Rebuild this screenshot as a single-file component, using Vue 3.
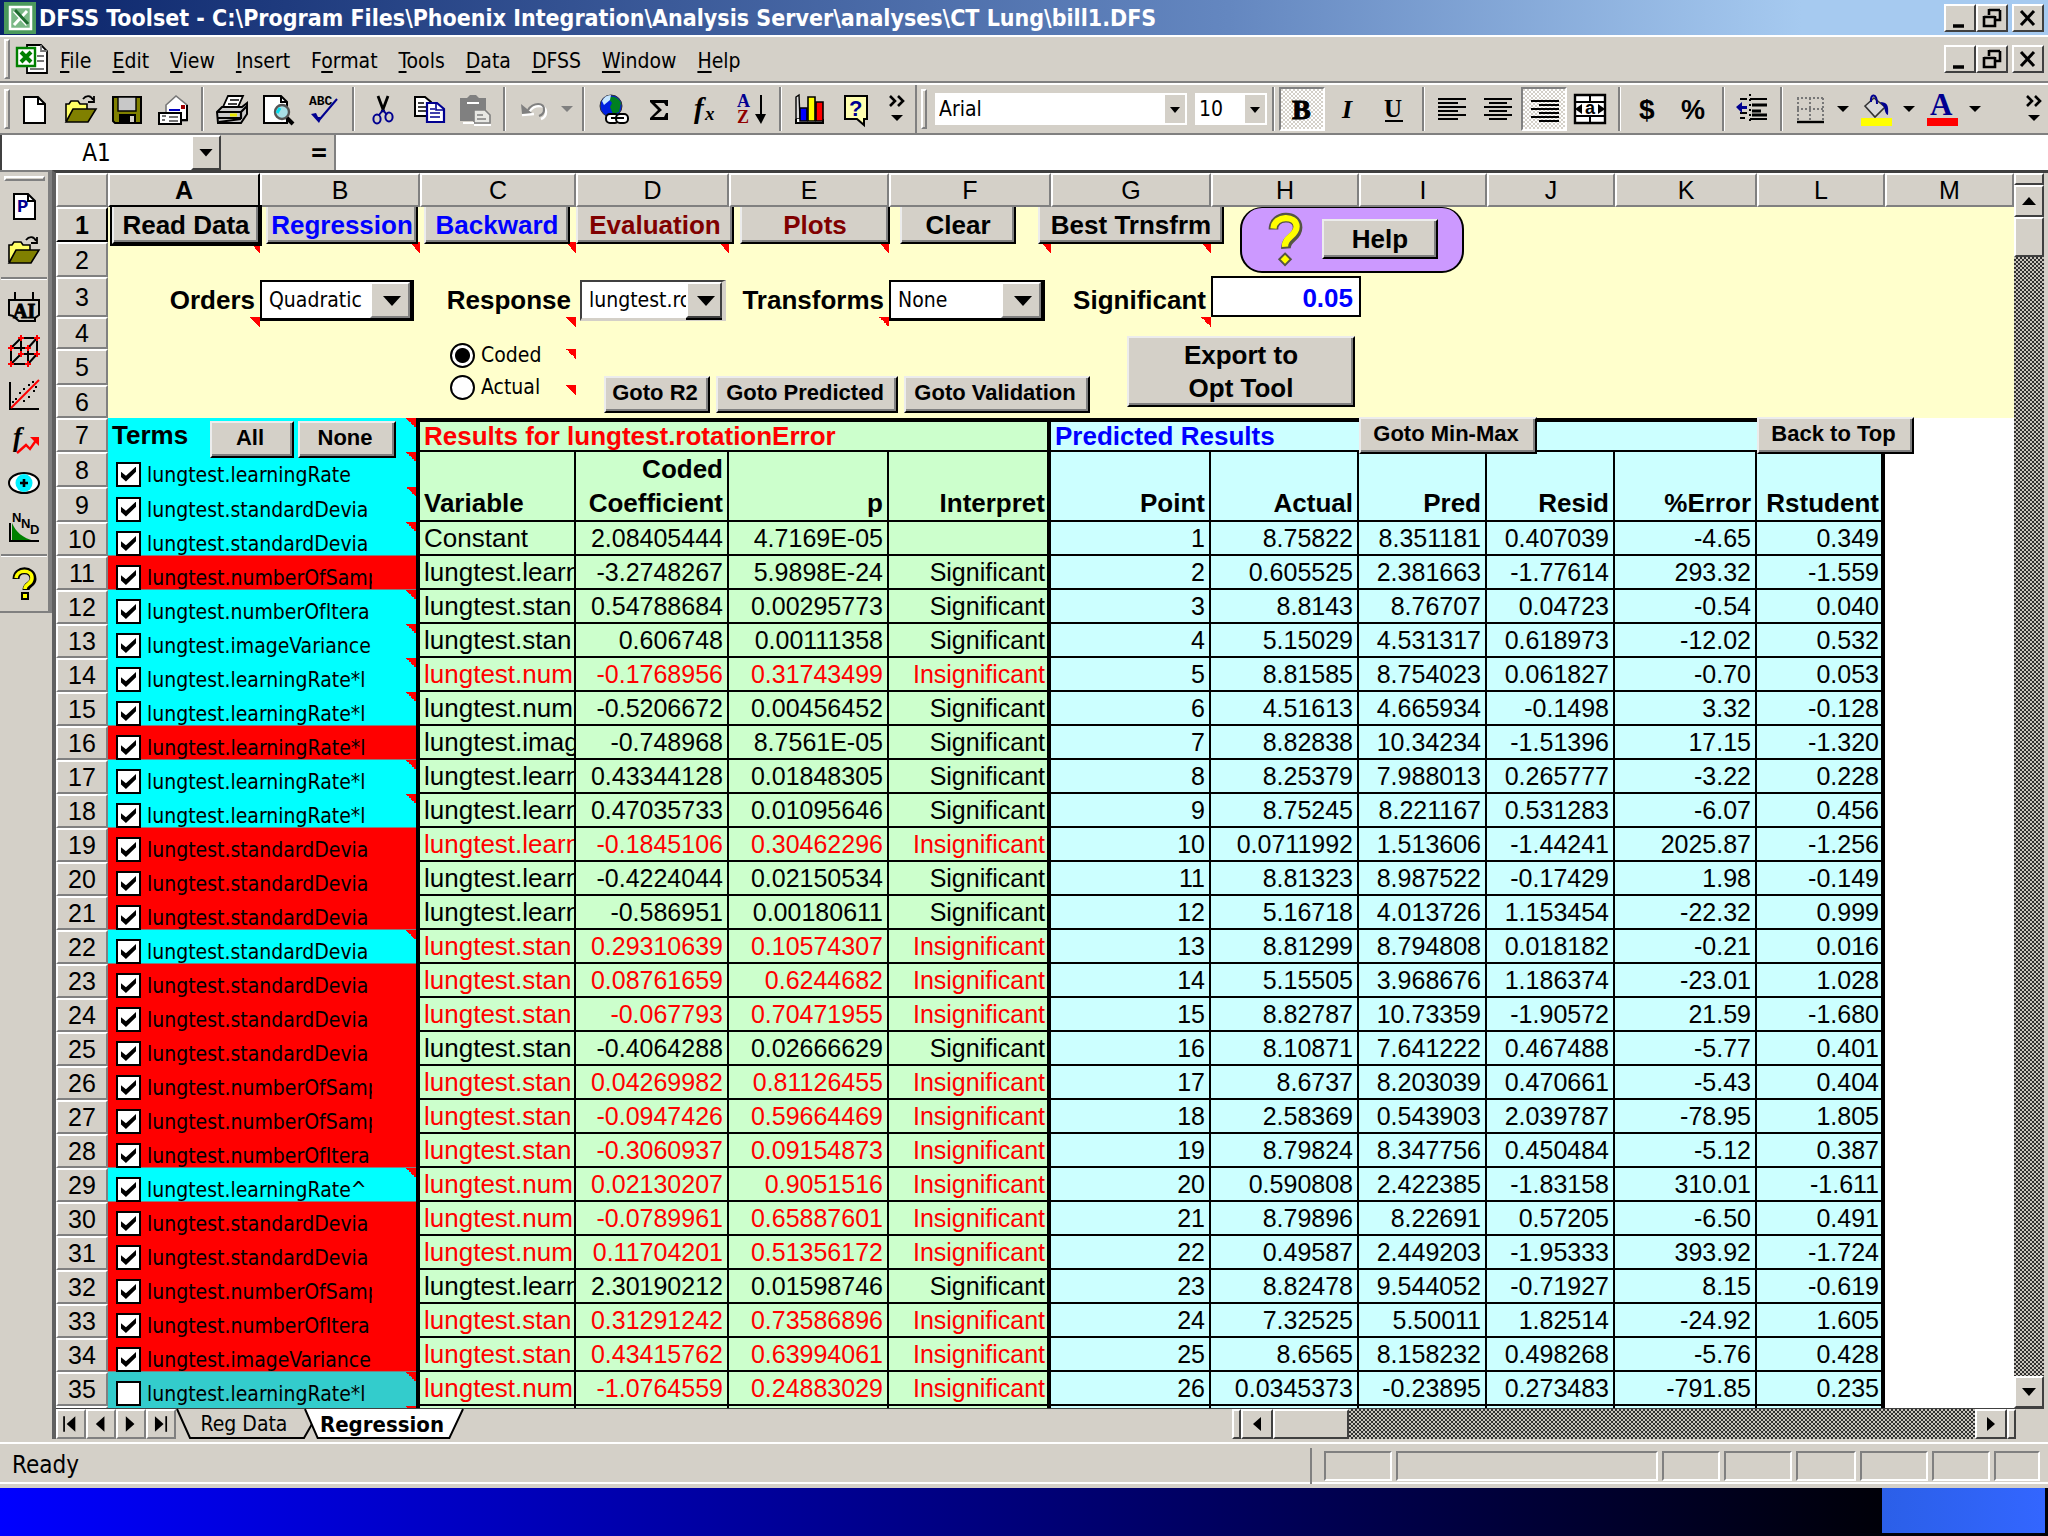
<script setup>
import { ref, reactive } from 'vue';

const menus = [
    ['', 'F', 'ile'], ['', 'E', 'dit'], ['', 'V', 'iew'], ['', 'I', 'nsert'], ['F', 'o', 'rmat'],
    ['', 'T', 'ools'], ['', 'D', 'ata'], ['', 'D', 'FSS'], ['', 'W', 'indow'], ['', 'H', 'elp']
];

const folder = '<path d="M1 28V11h3l2-3h7l2 3h7v5" fill="#ffff66" stroke="#000" stroke-width="1.6"/><path d="M1 29l7-13h23l-8 13z" fill="#808000" stroke="#000" stroke-width="1.6"/><path d="M18 6c3-4 8-4 10 1M29 3v6h-6" fill="none" stroke="#000" stroke-width="1.8"/>';

const icons = {
    excel: '<path d="M11 2h14l6 6v22H11z" fill="#fff" stroke="#000" stroke-width="1.8"/><path d="M25 2v6h6M21 13h7M21 18h7M14 26h14" fill="none" stroke="#777" stroke-width="1.8"/><path d="M1 5h18v18H1z" fill="#fff" stroke="#008000" stroke-width="2.4"/><path d="M5 9l10 10M15 9L5 19" stroke="#008000" stroke-width="4"/>',
    file: '<path d="M5 4h14l7 7v19H5z" fill="#fff" stroke="#000" stroke-width="2"/><path d="M19 4v7h7" fill="none" stroke="#000" stroke-width="2"/>',
    open: folder,
    save: '<path d="M2 4h28v26H4l-2-2z" fill="#808000" stroke="#000" stroke-width="2"/><path d="M7 4h18v14H7z" fill="#c8c8c8" stroke="#000" stroke-width="1.4"/><path d="M8 21h17v9H8z" fill="#000"/><path d="M19 23h4v6h-4z" fill="#d4d0c8"/>',
    mail: '<path d="M9 12l10-9 11 9v16H9z" fill="#fff" stroke="#777" stroke-width="1.6"/><path d="M30 12v15h-8" fill="none" stroke="#000" stroke-width="2"/><path d="M12 17h11" stroke="#0000c0" stroke-width="2"/><path d="M24 12h4v4h-4z" fill="#a00000"/><path d="M2 20h22v11H2z" fill="#fff" stroke="#000" stroke-width="2"/><path d="M5 23h4M5 27h3M12 24h9M12 28h9" stroke="#444" stroke-width="1.6"/>',
    print: '<path d="M7 14l5-11h15l-5 11z" fill="#fff" stroke="#000" stroke-width="1.8"/><path d="M14 7h9M12 11h9" stroke="#000" stroke-width="1.6"/><path d="M1 19l5-5h20l5-4v11l-6 9H2z" fill="#c8c8c8" stroke="#000" stroke-width="2"/><path d="M1 19h24v6H1M25 19l6-6M3 29l22-3" fill="none" stroke="#000" stroke-width="2.2"/><path d="M14 22h7" stroke="#e6e600" stroke-width="3"/>',
    preview: '<path d="M2 3h17l6 6v21H2z" fill="#fff" stroke="#000" stroke-width="2"/><path d="M19 3v6h6" fill="none" stroke="#000" stroke-width="2"/><circle cx="20" cy="19" r="7" fill="#a8dfe6" stroke="#555" stroke-width="2.4"/><path d="M18 15l-3 5" stroke="#00e0f0" stroke-width="3"/><path d="M25 25l6 6" stroke="#000" stroke-width="4"/>',
    spell: '<text x="1" y="12" font-family="Liberation Mono" font-weight="bold" font-size="13">ABC</text><path d="M29 6L12 26" stroke="#000090" stroke-width="2"/><path d="M3 21l8 9 3-6-4 0-2-4z" fill="#000090"/>',
    cut: '<path d="M11 3l6 16M21 3l-6 16" stroke="#000" stroke-width="2.8"/><path d="M16 17l-4 5M16 17l4 5" stroke="#000090" stroke-width="2"/><ellipse cx="10" cy="26" rx="3.6" ry="4.4" fill="none" stroke="#000090" stroke-width="2"/><ellipse cx="22" cy="24" rx="3.6" ry="4.4" fill="none" stroke="#000090" stroke-width="2"/>',
    copy: '<path d="M2 4h10l6 5v14H2z" fill="#fff" stroke="#000" stroke-width="2"/><path d="M5 10h6M5 14h8M5 18h8" stroke="#000" stroke-width="1.6"/><path d="M14 10h10l7 6v13H14z" fill="#fff" stroke="#000090" stroke-width="2.2"/><path d="M17 16h5M17 20h10M17 24h10M23 10v7h7" fill="none" stroke="#000090" stroke-width="1.6"/>',
    paste: '<path d="M1 5h7l3-3h6l3 3h7v23H1z" fill="#808080"/><path d="M8 10h12" stroke="#fff" stroke-width="2"/><path d="M15 17h11l5 5v8H15z" fill="#e8e8e4" stroke="#808080" stroke-width="1.6"/><path d="M18 22h6M18 26h9" stroke="#808080" stroke-width="1.6"/><path d="M4 30h11M15 32h17" stroke="#fff" stroke-width="2"/>',
    undo: '<path d="M11 19c5-8 17-8 17 0 0 4-2 6-5 7M4 22l12-1" fill="none" stroke="#fff" stroke-width="2.4"/><path d="M3 11l11 9-10 1z" fill="#808080"/><path d="M10 17c5-8 17-8 16 0 0 3-2 5-5 6" fill="none" stroke="#808080" stroke-width="2.2"/>',
    globe: '<circle cx="14" cy="13" r="11" fill="#0020e0" stroke="#333" stroke-width="1"/><path d="M11 5c5-3 11 0 13 5l-2 9-6 2-3-7 2-4z" fill="#008020"/><path d="M5 8c2-4 5-6 9-6l-1 5-6 5z" fill="#c8e8ff"/><rect x="9" y="21" width="13" height="9" rx="4" fill="#fff" stroke="#000" stroke-width="2"/><rect x="19" y="21" width="12" height="9" rx="4" fill="#fff" stroke="#000" stroke-width="2"/><path d="M14 25h13" stroke="#000" stroke-width="2"/>',
    sum: '<path d="M7 7h18v6h-2l-2-3H12l7 7-8 7h10l2-4h2v7H7v-2l8-8-8-8z" fill="#000"/>',
    fx: '<text x="5" y="25" font-family="Liberation Serif" font-style="italic" font-weight="bold" font-size="29">f</text><text x="16" y="27" font-family="Liberation Serif" font-style="italic" font-weight="bold" font-size="19">x</text>',
    sort: '<text x="2" y="14" font-family="Liberation Serif" font-weight="bold" font-size="18" fill="#000090">A</text><text x="2" y="30" font-family="Liberation Serif" font-weight="bold" font-size="18" fill="#900000">Z</text><path d="M26 2v22" stroke="#000" stroke-width="2"/><path d="M20 21h11l-5 10z"/>',
    chart: '<path d="M2 4l3-2 1 24H2z" fill="#ddd" stroke="#000" stroke-width="1.4"/><path d="M2 26v4h27v-4" fill="#fff" stroke="#000" stroke-width="2"/><path d="M6 15h7v13H6z" fill="#0000ff" stroke="#000" stroke-width="1.6"/><path d="M14 4h7v24h-7z" fill="#ffff00" stroke="#000" stroke-width="1.6"/><path d="M22 9h7v19h-7z" fill="#ff0000" stroke="#000" stroke-width="1.6"/>',
    help: '<path d="M5 3h22v23h-3v6l-7-6H5z" fill="#ffffb0" stroke="#000" stroke-width="2"/><text x="9" y="23" font-family="Liberation Sans" font-weight="bold" font-size="22" fill="#000090">?</text>',
    bold: '<text x="6" y="26" font-family="Liberation Serif" font-weight="bold" font-size="28" stroke="#000" stroke-width="1">B</text>',
    italic: '<text x="10" y="25" font-family="Liberation Serif" font-weight="bold" font-style="italic" font-size="26">I</text>',
    underline: '<text x="6" y="24" font-family="Liberation Serif" font-weight="bold" font-size="25">U</text><path d="M7 28h18" stroke="#000" stroke-width="2"/>',
    left: '<path d="M2 6h28M2 10h20M2 14h28M2 18h20M2 22h28M2 26h20" stroke="#000" stroke-width="2"/>',
    center: '<path d="M2 6h28M7 10h18M2 14h28M7 18h18M2 22h28M7 26h18" stroke="#000" stroke-width="2"/>',
    right: '<path d="M3 8h28M11 12h20M3 16h28M11 20h20M3 24h28M11 28h20" stroke="#000" stroke-width="2"/>',
    merge: '<path d="M1 2h30v28H1z" fill="#fff" stroke="#000" stroke-width="2.4"/><path d="M1 9h30M1 23h30M16 2v7M16 23v7" stroke="#000" stroke-width="2"/><path d="M1 16l7-5v10zM31 16l-7-5v10z"/><text x="11" y="21" font-family="Liberation Sans" font-weight="bold" font-size="18">a</text>',
    dollar: '<text x="7" y="26" font-family="Liberation Sans" font-weight="bold" font-size="28">$</text>',
    percent: '<text x="3" y="26" font-family="Liberation Sans" font-weight="bold" font-size="27">%</text>',
    indent: '<path d="M14 6h17M14 26h17M4 6h7M4 20h7M4 25h5" stroke="#000" stroke-width="2"/><path d="M16 12h15M16 18h9M16 22h15" stroke="#000" stroke-width="3"/><path d="M14 1v30" stroke="#000" stroke-width="2" stroke-dasharray="2 3"/><path d="M0 14l6-5v4h5v3H6v4z" fill="#000090"/>',
    borders: '<path d="M3 5h27M3 16h27M4 5v23M16 5v23M29 5v23" stroke="#777" stroke-width="2" stroke-dasharray="2 2"/><path d="M3 29h27" stroke="#000" stroke-width="2.4"/>',
    fill: '<path d="M5 13l9-8 11 9-10 10z" fill="#d8d8d8" stroke="#333" stroke-width="1.6"/><path d="M11 9c-1-9 6-9 6 2" fill="none" stroke="#000090" stroke-width="2"/><path d="M20 9c7 0 9 3 8 13-3-1-3-5-4-8z" fill="#000090"/><path d="M1 25h31v8H1z" fill="#ffff00"/>',
    color: '<text x="4" y="22" font-family="Liberation Serif" font-weight="bold" font-size="31" fill="#000090">A</text><path d="M1 25h31v8H1z" fill="#ff0000"/>',
    page: '<path d="M6 4h14l7 7v18H6z" fill="#fff" stroke="#000" stroke-width="2"/><path d="M20 4v7h7" fill="none" stroke="#000" stroke-width="2"/><text x="9" y="22" font-family="Liberation Mono" font-weight="bold" font-size="19" fill="#000090">P</text>',
    ai: '<path d="M7 1v8M25 1v8M1 9h30v15l-4 3v3H11l-6-5-4-1z" fill="none" stroke="#000" stroke-width="2"/><text x="5" y="27" font-family="Liberation Serif" font-weight="bold" font-size="20" stroke="#000" stroke-width="1">AI</text>',
    cube: '<path d="M3 13h17v16H3zM13 3h16v16H13zM3 13L13 3M20 13l9-10M20 29l9-10M3 29l10-10" fill="none" stroke="#000" stroke-width="2"/><path d="M3 10v6M0 13h6M20 10v6M17 13h6M3 26v6M0 29h6M20 26v6M17 29h6M13 0v6M10 3h6M29 0v6M26 3h6M13 16v6M10 19h6M29 16v6M26 19h6" stroke="#ff0000" stroke-width="2"/>',
    scatter: '<path d="M2 3v27h29" fill="none" stroke="#000" stroke-width="2"/><path d="M3 29L31 1" stroke="#ff0000" stroke-width="2"/><path d="M11 14h2M15 10h2M20 6h2M24 3h2M20 18h2M15 22h2M25 12h2M7 20h2M4 23h2M27 8h2" stroke="#000" stroke-width="2"/>',
    trend: '<text x="5" y="23" font-family="Liberation Serif" font-style="italic" font-weight="bold" font-size="27">f</text><path d="M9 30l9-8 4 4 7-10" fill="none" stroke="#ff0000" stroke-width="2.4"/><path d="M22 14h9v9z" fill="#ff0000"/>',
    eye: '<ellipse cx="16" cy="16" rx="15" ry="10" fill="#fff" stroke="#000" stroke-width="2"/><ellipse cx="16" cy="16" rx="8.5" ry="9" fill="#00f0ff"/><path d="M16 12v8M12 16h8" stroke="#000" stroke-width="2.6"/>',
    nnd: '<path d="M4 12c4 9 10 15 23 18H4z" fill="#008000"/><path d="M2 12v18h29" fill="none" stroke="#000" stroke-width="2"/><text x="4" y="11" font-family="Liberation Sans" font-size="13" font-weight="bold">N</text><text x="13" y="17" font-family="Liberation Sans" font-size="13" font-weight="bold">N</text><text x="22" y="23" font-family="Liberation Sans" font-size="13" font-weight="bold">D</text>',
    question: '<path d="M8 11c0-11 17-11 17 0 0 6-7 5-7 11" fill="none" stroke="#000" stroke-width="7"/><path d="M13 24h8v8h-8z" fill="#000"/><path d="M8 10c1-9 16-9 16 0 0 7-7 5-7 11" fill="none" stroke="#ffff00" stroke-width="3.6"/><path d="M15 26h4v4h-4z" fill="#ffff00"/>'
};

const standardTools = ['file', 'open', 'save', 'mail', '|', 'print', 'preview', 'spell', '|', 'cut', 'copy', 'paste', '|', 'undo', 'v', '|', 'globe', 'sum', 'fx', 'sort', '|', 'chart', 'help'];
const formatTools = ['|', 'bold', 'italic', 'underline', '|', 'left', 'center', 'right', 'merge', '|', 'dollar', 'percent', '|', 'indent', '|', 'borders', 'v', 'fill', 'v', 'color', 'v'];
const sideTools = ['page', 'open', '-', 'ai', 'cube', 'scatter', 'trend', 'eye', 'nnd', '-', 'question'];
const pressed = ['bold', 'right'];

const letters = 'ABCDEFGHIJKLM'.split('');

// columns of the top rows that carry a comment marker
const notes = { 2: 'ABCDEFG', 4: 'ACEG', 5: 'C', 6: 'C' };

const orders = ref('Quadratic');
const response = ref('lungtest.rotationError');
const transforms = ref('None');
const significant = ref('0.05');
const scale = ref('coded');
const font = ref('Arial');
const fontSize = ref('10');
const cellName = ref('A1');
const formula = ref('');

const term = (name, color, checked = true) => ({ name: 'lungtest.' + name, color, checked });
const terms = reactive([
    term('learningRate', 'cyan'),
    term('standardDevia', 'cyan'),
    term('standardDevia', 'cyan'),
    term('numberOfSamp', 'red'),
    term('numberOfItera', 'cyan'),
    term('imageVariance', 'cyan'),
    term('learningRate*l', 'cyan'),
    term('learningRate*l', 'cyan'),
    term('learningRate*l', 'red'),
    term('learningRate*l', 'cyan'),
    term('learningRate*l', 'cyan'),
    term('standardDevia', 'red'),
    term('standardDevia', 'red'),
    term('standardDevia', 'red'),
    term('standardDevia', 'cyan'),
    term('standardDevia', 'red'),
    term('standardDevia', 'red'),
    term('standardDevia', 'red'),
    term('numberOfSamp', 'red'),
    term('numberOfSamp', 'red'),
    term('numberOfItera', 'red'),
    term('learningRate^', 'cyan'),
    term('standardDevia', 'red'),
    term('standardDevia', 'red'),
    term('numberOfSamp', 'red'),
    term('numberOfItera', 'red'),
    term('imageVariance', 'red'),
    term('learningRate*l', 'teal', false)
]);

// variable, coefficient, p, interpret, then actual, pred, resid, %error, rstudent
const results = [
    ['Constant', '2.08405444', '4.7169E-05', '', '8.75822', '8.351181', '0.407039', '-4.65', '0.349'],
    ['lungtest.learn', '-3.2748267', '5.9898E-24', 'Significant', '0.605525', '2.381663', '-1.77614', '293.32', '-1.559'],
    ['lungtest.stan', '0.54788684', '0.00295773', 'Significant', '8.8143', '8.76707', '0.04723', '-0.54', '0.040'],
    ['lungtest.stan', '0.606748', '0.00111358', 'Significant', '5.15029', '4.531317', '0.618973', '-12.02', '0.532'],
    ['lungtest.num', '-0.1768956', '0.31743499', 'Insignificant', '8.81585', '8.754023', '0.061827', '-0.70', '0.053'],
    ['lungtest.num', '-0.5206672', '0.00456452', 'Significant', '4.51613', '4.665934', '-0.1498', '3.32', '-0.128'],
    ['lungtest.imag', '-0.748968', '8.7561E-05', 'Significant', '8.82838', '10.34234', '-1.51396', '17.15', '-1.320'],
    ['lungtest.learn', '0.43344128', '0.01848305', 'Significant', '8.25379', '7.988013', '0.265777', '-3.22', '0.228'],
    ['lungtest.learn', '0.47035733', '0.01095646', 'Significant', '8.75245', '8.221167', '0.531283', '-6.07', '0.456'],
    ['lungtest.learn', '-0.1845106', '0.30462296', 'Insignificant', '0.0711992', '1.513606', '-1.44241', '2025.87', '-1.256'],
    ['lungtest.learn', '-0.4224044', '0.02150534', 'Significant', '8.81323', '8.987522', '-0.17429', '1.98', '-0.149'],
    ['lungtest.learn', '-0.586951', '0.00180611', 'Significant', '5.16718', '4.013726', '1.153454', '-22.32', '0.999'],
    ['lungtest.stan', '0.29310639', '0.10574307', 'Insignificant', '8.81299', '8.794808', '0.018182', '-0.21', '0.016'],
    ['lungtest.stan', '0.08761659', '0.6244682', 'Insignificant', '5.15505', '3.968676', '1.186374', '-23.01', '1.028'],
    ['lungtest.stan', '-0.067793', '0.70471955', 'Insignificant', '8.82787', '10.73359', '-1.90572', '21.59', '-1.680'],
    ['lungtest.stan', '-0.4064288', '0.02666629', 'Significant', '8.10871', '7.641222', '0.467488', '-5.77', '0.401'],
    ['lungtest.stan', '0.04269982', '0.81126455', 'Insignificant', '8.6737', '8.203039', '0.470661', '-5.43', '0.404'],
    ['lungtest.stan', '-0.0947426', '0.59664469', 'Insignificant', '2.58369', '0.543903', '2.039787', '-78.95', '1.805'],
    ['lungtest.stan', '-0.3060937', '0.09154873', 'Insignificant', '8.79824', '8.347756', '0.450484', '-5.12', '0.387'],
    ['lungtest.num', '0.02130207', '0.9051516', 'Insignificant', '0.590808', '2.422385', '-1.83158', '310.01', '-1.611'],
    ['lungtest.num', '-0.0789961', '0.65887601', 'Insignificant', '8.79896', '8.22691', '0.57205', '-6.50', '0.491'],
    ['lungtest.num', '0.11704201', '0.51356172', 'Insignificant', '0.49587', '2.449203', '-1.95333', '393.92', '-1.724'],
    ['lungtest.learn', '2.30190212', '0.01598746', 'Significant', '8.82478', '9.544052', '-0.71927', '8.15', '-0.619'],
    ['lungtest.stan', '0.31291242', '0.73586896', 'Insignificant', '7.32525', '5.50011', '1.82514', '-24.92', '1.605'],
    ['lungtest.stan', '0.43415762', '0.63994061', 'Insignificant', '8.6565', '8.158232', '0.498268', '-5.76', '0.428'],
    ['lungtest.num', '-1.0764559', '0.24883029', 'Insignificant', '0.0345373', '-0.23895', '0.273483', '-791.85', '0.235']
];

function setAll(value) {
    terms.forEach(t => (t.checked = value));
}
</script>

<template>
    <div class="screen">
        <header class="titleBar">
            <svg class="appIcon" viewBox="0 0 32 32">
                <rect width="32" height="32" fill="#4c9a5c" />
                <path d="M6 5h21v22H6z" fill="#7ab886" stroke="#fff" stroke-width="2.5" />
                <path d="M10 9l13 14M23 9L10 23" stroke="#fff" stroke-width="3" />
                <path d="M11 8l13 14" stroke="#1f6b30" stroke-width="3" />
            </svg>
            <h1>DFSS Toolset - C:\Program Files\Phoenix Integration\Analysis Server\analyses\CT Lung\bill1.DFS</h1>
            <div class="windowButtons">
                <button aria-label="Minimize"><svg viewBox="0 0 28 24"><path d="M7 20h11" stroke="#000" stroke-width="3.5" /></svg></button>
                <button aria-label="Restore"><svg viewBox="0 0 28 24"><path d="M11 4h11M11 3v6M22 4v10h-4M6 11h11M6 10v10h11V10" fill="none" stroke="#000" stroke-width="2.6" /></svg></button>
                <button aria-label="Close" class="close"><svg viewBox="0 0 28 24"><path d="M7 5l13 14M20 5L7 19" stroke="#000" stroke-width="3" /></svg></button>
            </div>
        </header>

        <nav class="menuBar">
            <span class="handle"></span>
            <svg class="docIcon" viewBox="0 0 32 32" v-html="icons.excel"></svg>
            <button v-for="(m, i) in menus" :key="i" class="menu">{{ m[0] }}<u>{{ m[1] }}</u>{{ m[2] }}</button>
            <div class="windowButtons">
                <button aria-label="Minimize workbook"><svg viewBox="0 0 28 24"><path d="M7 20h11" stroke="#000" stroke-width="3.5" /></svg></button>
                <button aria-label="Restore workbook"><svg viewBox="0 0 28 24"><path d="M11 4h11M11 3v6M22 4v10h-4M6 11h11M6 10v10h11V10" fill="none" stroke="#000" stroke-width="2.6" /></svg></button>
                <button aria-label="Close workbook" class="close"><svg viewBox="0 0 28 24"><path d="M7 5l13 14M20 5L7 19" stroke="#000" stroke-width="3" /></svg></button>
            </div>
        </nav>

        <div class="toolBars">
            <div class="toolBar standard">
                <span class="handle"></span>
                <template v-for="(t, i) in standardTools" :key="i">
                    <span v-if="t === '|'" class="divider"></span>
                    <button v-else-if="t === 'v'" class="drop faded" aria-label="Undo list"></button>
                    <button v-else class="tool" :aria-label="t"><svg viewBox="0 0 32 32" v-html="icons[t]"></svg></button>
                </template>
                <button class="more" aria-label="More buttons">
                    <svg viewBox="0 0 20 32"><path d="M3 3l5 5-5 5M11 3l5 5-5 5" fill="none" stroke="#000" stroke-width="2.6" /><path d="M4 22h12l-6 6z" /></svg>
                </button>
            </div>
            <div class="toolBar">
                <span class="handle"></span>
                <span class="combo fontName">
                    <select v-model="font" aria-label="Font"><option>Arial</option></select>
                </span>
                <span class="combo fontSize">
                    <select v-model="fontSize" aria-label="Font size"><option>10</option></select>
                </span>
                <template v-for="(t, i) in formatTools" :key="i">
                    <span v-if="t === '|'" class="divider"></span>
                    <button v-else-if="t === 'v'" class="drop" aria-label="Choose"></button>
                    <button v-else class="tool" :class="{ pressed: pressed.includes(t) }" :aria-label="t"><svg viewBox="0 0 32 32" v-html="icons[t]"></svg></button>
                </template>
                <button class="more last" aria-label="More buttons">
                    <svg viewBox="0 0 20 32"><path d="M3 3l5 5-5 5M11 3l5 5-5 5" fill="none" stroke="#000" stroke-width="2.6" /><path d="M4 22h12l-6 6z" /></svg>
                </button>
            </div>
        </div>

        <div class="formulaBar">
            <input v-model="cellName" class="nameBox" aria-label="Name box">
            <button class="nameDrop" aria-label="Names"></button>
            <button class="equals">=</button>
            <input v-model="formula" class="formula" aria-label="Formula">
        </div>

        <div class="workspace">
            <aside class="sideBar">
                <div class="sideTools">
                    <span class="grip"></span>
                    <template v-for="(t, i) in sideTools" :key="i">
                        <span v-if="t === '-'" class="rule"></span>
                        <button v-else class="sideTool" :aria-label="t"><svg viewBox="0 0 32 32" v-html="icons[t]"></svg></button>
                    </template>
                </div>
            </aside>

            <main class="book">
                <div class="bookTop">
                    <div class="sheet">
                        <table>
                            <colgroup>
                                <col class="cHead"><col v-for="l in letters" :key="l" :class="'c' + l">
                            </colgroup>
                            <thead>
                                <tr>
                                    <th class="head"></th>
                                    <th v-for="l in letters" :key="l" class="head" :class="{ active: l === 'A' }">{{ l }}</th>
                                </tr>
                            </thead>
                            <tbody>
                                <tr v-for="n in 6" :key="n" :class="'top' + n">
                                    <th class="head" :class="{ active: n === 1 }">{{ n }}</th>
                                    <td v-for="l in letters" :key="l" class="cream" :class="{ noted: notes[n] && notes[n].includes(l) }"></td>
                                </tr>
                                <tr>
                                    <th class="head">7</th>
                                    <td colspan="2" class="cyan noted thickRight">
                                        <div class="termsHead">
                                            <b>Terms</b>
                                            <button class="raised small" @click="setAll(true)">All</button>
                                            <button class="raised small none" @click="setAll(false)">None</button>
                                        </div>
                                    </td>
                                    <td colspan="4" class="green thickTop thickRight lined title redText">Results for lungtest.rotationError</td>
                                    <td colspan="2" class="blue thickTop lined title blueText">Predicted Results</td>
                                    <td colspan="3" class="blue thickTop lined floater"><button class="raised small minMax">Goto Min-Max</button></td>
                                    <td class="blue thickTop lined thickRight floater"><button class="raised small toTop">Back to Top</button></td>
                                    <td></td>
                                </tr>
                                <tr v-for="(t, i) in terms" :key="i">
                                    <th class="head">{{ i + 8 }}</th>
                                    <td colspan="2" class="term thickRight noted" :class="[t.color, { ruled: terms[i + 1] && terms[i + 1].color !== t.color }]">
                                        <label><input v-model="t.checked" type="checkbox"><span>{{ t.name }}</span></label>
                                    </td>
                                    <template v-if="i === 0">
                                        <th rowspan="2" class="cell green nameCell">Variable</th>
                                        <th rowspan="2" class="cell green">Coded<br>Coefficient</th>
                                        <th rowspan="2" class="cell green">p</th>
                                        <th rowspan="2" class="cell green thickRight tight">Interpret</th>
                                        <th rowspan="2" class="cell blue">Point</th>
                                        <th rowspan="2" class="cell blue">Actual</th>
                                        <th rowspan="2" class="cell blue">Pred</th>
                                        <th rowspan="2" class="cell blue">Resid</th>
                                        <th rowspan="2" class="cell blue">%Error</th>
                                        <th rowspan="2" class="cell blue thickRight tight">Rstudent</th>
                                    </template>
                                    <template v-else-if="i > 1">
                                        <td v-for="(v, c) in results[i - 2].slice(0, 4)" :key="c" class="cell green"
                                            :class="{ nameCell: c === 0, 'thickRight tight': c === 3, redText: results[i - 2][3] === 'Insignificant' }">{{ v }}</td>
                                        <td class="cell blue">{{ i - 1 }}</td>
                                        <td v-for="(v, c) in results[i - 2].slice(4)" :key="'r' + c" class="cell blue" :class="{ 'thickRight tight': c === 4 }">{{ v }}</td>
                                    </template>
                                    <td></td>
                                </tr>
                                <tr>
                                    <th class="head"></th>
                                    <td colspan="2" class="teal thickRight noted"></td>
                                    <td v-for="n in 10" :key="n" class="cell" :class="[n < 5 ? 'green' : 'blue', { thickRight: n === 4 || n === 10 }]"></td>
                                    <td></td>
                                </tr>
                            </tbody>
                        </table>

                        <!-- controls floating over rows 1 to 6 -->
                        <div class="panel">
                            <div class="macros">
                                <button class="raised readData">Read Data</button>
                                <button class="raised regression blueText">Regression</button>
                                <button class="raised backward blueText">Backward</button>
                                <button class="raised evaluation maroon">Evaluation</button>
                                <button class="raised plots maroon">Plots</button>
                                <button class="raised clear">Clear</button>
                                <button class="raised best">Best Trnsfrm</button>
                                <div class="helpBox">
                                    <svg viewBox="0 0 36 56">
                                        <path d="M5 17C5 1 30 1 30 15c0 11-13 11-12 22" fill="none" stroke="#554" stroke-width="10" />
                                        <path d="M5 16C6 2 29 2 29 14c0 10-13 11-12 21" fill="none" stroke="#ffff00" stroke-width="6.5" />
                                        <path d="M17 42l6 6-6 6-6-6z" fill="#ffff00" stroke="#554" stroke-width="2" />
                                    </svg>
                                    <button class="raised">Help</button>
                                </div>
                            </div>
                            <div class="options">
                                <label for="orders">Orders</label>
                                <span class="picker ordersPicker"><select id="orders" v-model="orders"><option>Quadratic</option><option>Linear</option></select></span>
                                <label for="response">Response</label>
                                <span class="picker sunken"><select id="response" v-model="response"><option>lungtest.rotationError</option></select></span>
                                <label for="transforms">Transforms</label>
                                <span class="picker transformsPicker"><select id="transforms" v-model="transforms"><option>None</option></select></span>
                                <label for="significant">Significant</label>
                                <input id="significant" v-model="significant" type="text">
                            </div>
                            <div class="gotos">
                                <div class="radios">
                                    <label><input v-model="scale" type="radio" name="scale" value="coded">Coded</label>
                                    <label><input v-model="scale" type="radio" name="scale" value="actual">Actual</label>
                                </div>
                                <button class="raised small gotoR2">Goto R2</button>
                                <button class="raised small gotoPredicted">Goto Predicted</button>
                                <button class="raised small gotoValidation">Goto Validation</button>
                                <button class="raised export">Export to<br>Opt Tool</button>
                            </div>
                        </div>
                    </div>

                    <div class="vScroll">
                        <span class="split"></span>
                        <button class="up" aria-label="Scroll up"></button>
                        <span class="thumb"></span>
                        <button class="down" aria-label="Scroll down"></button>
                    </div>
                </div>

                <div class="bookBottom">
                    <div class="tabNav">
                        <button aria-label="First sheet"><svg viewBox="0 0 30 30"><path d="M7 6v18" stroke="#000" stroke-width="2" /><path d="M20 6v18l-10-9z" /></svg></button>
                        <button aria-label="Previous sheet"><svg viewBox="0 0 30 30"><path d="M19 6v18l-10-9z" /></svg></button>
                        <button aria-label="Next sheet"><svg viewBox="0 0 30 30"><path d="M9 6v18l10-9z" /></svg></button>
                        <button aria-label="Last sheet"><svg viewBox="0 0 30 30"><path d="M8 6v18l10-9z" /><path d="M21 6v18" stroke="#000" stroke-width="2" /></svg></button>
                    </div>
                    <button class="tab">
                        <svg viewBox="0 0 136 30" preserveAspectRatio="none"><path d="M1 0l13 29h114l8-14" fill="#d4d0c8" stroke="#000" stroke-width="2" /></svg>
                        <span>Reg Data</span>
                    </button>
                    <button class="tab current">
                        <svg viewBox="0 0 164 30" preserveAspectRatio="none"><path d="M1 0l13 29h135l14-29" fill="#fff" stroke="#000" stroke-width="2" /></svg>
                        <span>Regression</span>
                    </button>
                    <div class="hScroll">
                        <span class="bar"></span>
                        <button class="back" aria-label="Scroll left"></button>
                        <span class="hThumb"></span>
                        <span class="track"></span>
                        <button class="forward" aria-label="Scroll right"></button>
                        <span class="bar"></span>
                    </div>
                </div>
            </main>
        </div>

        <footer class="statusBar">
            <span class="ready">Ready</span>
            <span class="pane w68"></span>
            <span class="pane w260"></span>
            <span class="pane w56"></span>
            <span class="pane w68"></span>
            <span class="pane w60"></span>
            <span class="pane w68"></span>
            <span class="pane w56"></span>
            <span class="pane w48"></span>
        </footer>
        <div class="desktop"><span></span></div>
    </div>
</template>

<style>
body {
    margin: 0;
    background: #000;
}
</style>

<style scoped>
.screen {
    display: flex;
    flex-direction: column;
    height: 100vh;
    overflow: hidden;
    background: #d4d0c8;
    color: #000;
    font-family: "DejaVu Sans Condensed", "DejaVu Sans", sans-serif;
    font-size: 21px;
}

.screen * {
    box-sizing: border-box;
}

button, input, select {
    font: inherit;
    color: inherit;
    margin: 0;
    padding: 0;
    border: 0;
    border-radius: 0;
    background: none;
    white-space: nowrap;
}

svg {
    display: block;
    overflow: visible;
}

/* title and menu */
.titleBar {
    display: flex;
    align-items: center;
    flex: none;
    height: 35px;
    padding: 0 4px;
    background: linear-gradient(90deg, #0a246a, #6487c0 60%, #a6caf0 88%);
    color: #fff;
}

.appIcon {
    width: 32px;
    height: 32px;
}

h1 {
    flex: 1;
    margin: 0 0 0 3px;
    font-size: 23px;
    line-height: 30px;
    font-weight: bold;
    white-space: nowrap;
}

.windowButtons {
    display: flex;
    margin-left: auto;
}

.windowButtons button {
    width: 32px;
    height: 28px;
    background: #d4d0c8;
    border: 2px solid;
    border-color: #fff #404040 #404040 #fff;
}

.windowButtons .close {
    margin-left: 4px;
}

.menuBar {
    display: flex;
    align-items: center;
    flex: none;
    height: 48px;
    padding: 0 4px;
    border-top: 2px solid #fff;
    border-bottom: 2px solid #808080;
}

.handle {
    flex: none;
    width: 6px;
    height: 40px;
    border: 2px solid;
    border-color: #fff #808080 #808080 #fff;
}

.docIcon {
    width: 32px;
    height: 32px;
    margin: 0 2px 0 6px;
}

.menu {
    padding: 4px 11px 0 10px;
}

.menu u {
    text-underline-offset: 3px;
}

/* tool bars */
.toolBars {
    display: flex;
    flex: none;
    height: 52px;
    border-top: 2px solid #fff;
    border-bottom: 2px solid #808080;
}

.toolBar {
    display: flex;
    align-items: center;
    flex: 1;
    padding-left: 4px;
}

.standard {
    flex: none;
    border-right: 2px solid #808080;
}

.standard .handle {
    margin-right: 2px;
}

.tool {
    flex: none;
    width: 46px;
    height: 44px;
    padding: 0 7px;
}

.pressed {
    background: conic-gradient(#fff 25%, #d4d0c8 0 50%, #fff 0 75%, #d4d0c8 0) 0 0 / 4px 4px;
    border: 2px solid;
    border-color: #808080 #fff #fff #808080;
    padding: 0 5px;
}

.divider {
    flex: none;
    width: 3px;
    height: 44px;
    margin: 0 4px 0 5px;
    border-left: 2px solid #808080;
    border-right: 1px solid #fff;
}

.standard .divider {
    margin: 0 5px;
}

.drop {
    flex: none;
    width: 20px;
    height: 44px;
}

.drop::after {
    content: "";
    display: block;
    margin: 0 auto;
    width: 12px;
    height: 6px;
    background: #000;
    clip-path: polygon(0 0, 100% 0, 50% 100%);
}

.faded::after {
    background: #808080;
}

.more {
    width: 36px;
    padding: 0 8px;
}

.last {
    width: 20px;
    margin-left: auto;
    margin-right: 4px;
    padding: 0;
}

.combo {
    position: relative;
    flex: none;
    height: 32px;
    background: #fff;
}

.combo::after {
    content: "";
    position: absolute;
    right: 2px;
    top: 2px;
    bottom: 2px;
    width: 20px;
    background: #d4d0c8;
    pointer-events: none;
}

.combo::before {
    content: "";
    position: absolute;
    z-index: 1;
    right: 7px;
    top: 14px;
    width: 10px;
    height: 6px;
    background: #000;
    clip-path: polygon(0 0, 100% 0, 50% 100%);
    pointer-events: none;
}

.combo select {
    appearance: none;
    width: 100%;
    height: 100%;
    padding-left: 4px;
}

.fontName {
    width: 252px;
    margin: 0 8px;
}

.fontSize {
    width: 72px;
}

/* formula bar */
.formulaBar {
    display: flex;
    flex: none;
    height: 35px;
    font-size: 24px;
}

.nameBox {
    width: 191px;
    background: #fff;
    text-align: center;
    border-left: 2px solid #404040;
}

.nameDrop, .vScroll button, .hScroll button {
    display: grid;
    place-items: center;
    flex: none;
    background: #d4d0c8;
    border: 2px solid;
    border-color: #fff #404040 #404040 #fff;
}

.nameDrop {
    width: 30px;
}

.nameDrop::after, .vScroll button::after, .hScroll button::after {
    content: "";
    width: 14px;
    height: 8px;
    background: #000;
    clip-path: polygon(0 0, 100% 0, 50% 100%);
}

.equals {
    width: 115px;
    padding-right: 6px;
    text-align: right;
    font-weight: bold;
    border-right: 2px solid #808080;
}

.formula {
    flex: 1;
    padding-left: 4px;
    background: #fff;
}

/* side bar */
.workspace {
    display: flex;
    flex: 1;
    min-height: 0;
}

.sideBar {
    flex: none;
    width: 52px;
    border-top: 2px solid #808080;
}

.sideTools {
    display: flex;
    flex-direction: column;
    align-items: center;
    padding: 4px 0 5px;
    border-right: 4px solid #808080;
    border-bottom: 2px solid #808080;
}

.grip {
    width: 41px;
    height: 5px;
    margin-bottom: 3px;
    border: 2px solid;
    border-color: #fff #808080 #808080 #fff;
}

.sideTool {
    padding: 6px 0;
}

.sideTool svg {
    width: 32px;
    height: 32px;
}

.rule {
    width: 46px;
    height: 3px;
    margin: 5px 0;
    border-top: 2px solid #808080;
    border-bottom: 1px solid #fff;
}

/* sheet */
.book {
    display: flex;
    flex-direction: column;
    flex: 1;
    min-width: 0;
    padding-right: 4px;
    border-top: 3px solid #404040;
    border-left: 4px solid #606060;
}

.bookTop {
    display: flex;
    flex: 1;
    min-height: 0;
    border-bottom: 1px solid #404040;
}

.sheet {
    position: relative;
    flex: 1;
    min-width: 0;
    overflow: hidden;
    background: #fff;
    font-family: "Liberation Sans", Arial, sans-serif;
    font-size: 25px;
}

table {
    width: 100%;
    table-layout: fixed;
    border-collapse: separate;
    border-spacing: 0;
}

.cHead { width: 52px; }
.cA { width: 152px; }
.cB { width: 160px; }
.cC { width: 156px; }
.cD { width: 153px; }
.cE { width: 160px; }
.cF { width: 162px; }
.cG { width: 160px; }
.cH { width: 148px; }
.cI { width: 128px; }
.cJ { width: 128px; }
.cK { width: 142px; }
.cL { width: 128px; }

tr {
    height: 34px;
}

.top1, .top2 { height: 35px; }
.top3 { height: 40px; }
.top4 { height: 32px; }
.top5 { height: 36px; }
.top6 { height: 33px; }

th, td {
    padding: 0;
    line-height: 28px;
    white-space: nowrap;
}

.head {
    background: #d4d0c8;
    border: 2px solid;
    border-color: #fff #808080 #808080 #fff;
    font-weight: normal;
}

.head.active {
    font-weight: bold;
    border-right-color: #000;
    border-bottom-color: #000;
}

.cream { background-color: #ffffcc; }
.cyan { background-color: #00ffff; }
.red { background-color: #ff0000; }
.teal { background-color: #33cccc; }
.green { background-color: #ccffcc; }
.blue { background-color: #ccffff; }
.redText { color: #ff0000; }
.blueText { color: #0000ff; }
.maroon { color: #800000; }

.noted {
    background-image: linear-gradient(to top right, transparent 50%, #ff0000 50%);
    background-size: 10px 10px;
    background-position: right top;
    background-repeat: no-repeat;
    background-origin: padding-box;
}

.top2 .noted {
    background-size: 10px 12px;
}

.cell {
    padding: 2px 4px 2px 4px;
    border-right: 2px solid #000;
    border-bottom: 2px solid #000;
    text-align: right;
    vertical-align: bottom;
    overflow: hidden;
}

.cell.tight {
    padding-right: 2px;
}

th.cell {
    font-size: 26px;
    line-height: 34px;
    padding: 0 4px;
}

.cell.nameCell {
    font-size: 26px;
    text-align: left;
    padding-right: 0;
}

.thickRight {
    border-right: 4px solid #000;
}

.thickTop {
    border-top: 4px solid #000;
}

.lined {
    border-bottom: 2px solid #000;
}

.title {
    padding-left: 4px;
    font-size: 26px;
    font-weight: bold;
}

.termsHead {
    display: flex;
    align-items: flex-start;
    height: 34px;
    padding-left: 4px;
    font-size: 26px;
    line-height: 34px;
}

.termsHead b {
    width: 98px;
}

.termsHead button {
    position: relative;
    margin-top: 3px;
    width: 84px;
}

.termsHead .none {
    width: 98px;
    margin-left: 4px;
}

.floater {
    position: relative;
    vertical-align: top;
}

.floater button {
    position: absolute;
    top: -5px;
    left: 0;
}

.minMax {
    width: 178px;
}

.toTop {
    width: 157px;
}

.term label {
    display: flex;
    align-items: flex-end;
    width: 264px;
    height: 34px;
    padding-left: 8px;
    overflow: hidden;
    font-family: "DejaVu Sans Condensed", "DejaVu Sans", sans-serif;
    font-size: 21px;
    line-height: 24px;
}

.term span {
    margin-left: 6px;
}

.ruled {
    box-shadow: inset 0 -1px #808080;
}

input[type="checkbox"] {
    appearance: none;
    flex: none;
    width: 25px;
    height: 25px;
    background: #fff;
    border: 2px solid #000;
}

input[type="checkbox"]:checked::after {
    content: "";
    display: block;
    width: 15px;
    height: 15px;
    margin: 3px;
    background: #000;
    clip-path: polygon(0 35%, 33% 62%, 100% 0, 100% 35%, 33% 100%, 0 70%);
}

/* floating controls */
.raised {
    flex: none;
    height: 37px;
    background: #d4d0c8;
    border: 2px solid;
    border-color: #ececec #000 #000 #ececec;
    box-shadow: inset -2px -2px #808080;
    font-family: "Liberation Sans", Arial, sans-serif;
    font-size: 26px;
    font-weight: bold;
    line-height: 30px;
}

.raised.small {
    padding: 0 4px 4px 0;
    font-size: 22px;
}

.panel {
    position: absolute;
    top: 34px;
    left: 52px;
    right: 0;
    height: 211px;
}

.macros {
    display: flex;
    align-items: flex-start;
    gap: 6px;
    height: 69px;
    padding-left: 4px;
}

.macros > .raised {
    border-top-width: 0;
}

.readData {
    width: 148px;
    outline: 2px solid #000;
}

.regression { width: 152px; }
.backward { width: 146px; }
.evaluation { width: 158px; }
.plots { width: 150px; }

.clear {
    width: 116px;
    margin-left: 4px;
}

.best {
    width: 186px;
    margin-left: 16px;
}

.helpBox {
    display: flex;
    align-items: center;
    gap: 18px;
    width: 224px;
    height: 66px;
    margin-left: 10px;
    padding-left: 26px;
    background: #cc99ff;
    border: 2px solid #000;
    border-top-width: 1px;
    border-radius: 22px;
}

.helpBox svg {
    width: 36px;
    height: 54px;
}

.helpBox button {
    width: 116px;
    height: 40px;
    margin-bottom: 2px;
}

.options {
    display: grid;
    grid-template-columns: 152px 160px 156px 153px 160px 162px 160px 150px;
    align-items: end;
    height: 45px;
}

.options label {
    justify-self: end;
    padding: 0 5px 6px 0;
    font-size: 26px;
    line-height: 30px;
    font-weight: bold;
}

.options input {
    align-self: start;
    width: 150px;
    height: 41px;
    padding: 4px 6px 0 0;
    background: #fff;
    border: 2px solid #000;
    color: #0000ff;
    font-size: 26px;
    font-weight: bold;
    text-align: right;
}

.picker {
    position: relative;
    height: 41px;
    background: #fff;
    border: 2px solid #000;
    border-right-width: 4px;
    border-bottom-width: 3px;
    font-family: "DejaVu Sans Condensed", "DejaVu Sans", sans-serif;
    font-size: 21px;
}

.picker select {
    appearance: none;
    width: 100%;
    height: 100%;
    padding-left: 7px;
}

.picker::before {
    content: "";
    position: absolute;
    right: 0;
    top: 0;
    bottom: 0;
    width: 36px;
    background: #d4d0c8;
    border: 2px solid;
    border-color: #fff #808080 #808080 #fff;
    box-shadow: 0 2px #000;
    pointer-events: none;
}

.picker::after {
    content: "";
    position: absolute;
    right: 9px;
    top: 14px;
    width: 18px;
    height: 10px;
    background: #000;
    clip-path: polygon(0 0, 100% 0, 50% 100%);
    pointer-events: none;
}

.ordersPicker {
    width: 154px;
}

.transformsPicker {
    width: 156px;
}

.sunken {
    width: 146px;
    margin-left: 4px;
    border-color: #404040 #d4d0c8 #d4d0c8 #404040;
}

.sunken::before {
    width: 32px;
    border-color: #fff #404040 #404040 #fff;
}

.sunken::after {
    right: 7px;
}

.gotos {
    display: flex;
    align-items: flex-start;
    gap: 6px;
    padding: 15px 0 0 342px;
}

.radios {
    display: flex;
    flex-direction: column;
    width: 148px;
    margin-top: 3px;
    font-family: "DejaVu Sans Condensed", "DejaVu Sans", sans-serif;
    font-size: 21px;
}

.radios label {
    display: flex;
    align-items: center;
    height: 32px;
}

input[type="radio"] {
    appearance: none;
    width: 25px;
    height: 25px;
    margin-right: 6px;
    background: #fff;
    border: 2px solid #000;
    border-radius: 50%;
}

input[type="radio"]:checked {
    background: radial-gradient(circle, #000 7px, #fff 8px);
}

.gotos .small {
    margin-top: 40px;
}

.gotoR2 { width: 106px; }
.gotoPredicted { width: 182px; }
.gotoValidation { width: 186px; }

.export {
    width: 228px;
    height: 71px;
    margin-left: 31px;
    line-height: 33px;
}

/* scroll bars */
.vScroll {
    display: flex;
    flex-direction: column;
    flex: none;
    width: 30px;
}

.vScroll, .track {
    background: conic-gradient(#303030 25%, #c8c4bc 0 50%, #303030 0 75%, #c8c4bc 0) 0 0 / 4px 4px;
}

.split, .thumb, .bar, .hThumb {
    flex: none;
    background: #d4d0c8;
    border: 2px solid;
    border-color: #fff #404040 #404040 #fff;
}

.split {
    height: 12px;
}

.vScroll button {
    height: 32px;
}

.vScroll .up::after, .hScroll .back::after {
    clip-path: polygon(50% 0, 100% 100%, 0 100%);
}

.thumb {
    height: 40px;
}

.down {
    margin-top: auto;
}

.bookBottom {
    display: flex;
    flex: none;
    height: 30px;
}

.tabNav {
    display: flex;
}

.tabNav button {
    width: 30px;
    border: 2px solid;
    border-color: #fff #808080 #808080 #fff;
}

.tab {
    position: relative;
    width: 136px;
}

.tab svg {
    position: absolute;
    inset: 0;
    width: 100%;
    height: 100%;
}

.tab span {
    position: relative;
}

.current {
    width: 160px;
    margin-left: -8px;
    padding-right: 4px;
    font-size: 22px;
    font-weight: bold;
}

.hScroll {
    display: flex;
    width: 784px;
    margin-left: auto;
    margin-right: 28px;
}

.bar {
    width: 9px;
}

.hScroll button {
    width: 32px;
}

.hScroll button::after {
    width: 8px;
    height: 14px;
}

.hScroll .back::after {
    clip-path: polygon(100% 0, 100% 100%, 0 50%);
}

.hScroll .forward::after {
    clip-path: polygon(0 0, 0 100%, 100% 50%);
}

.hThumb {
    width: 76px;
}

.track {
    flex: 1;
}

/* status */
.statusBar {
    display: flex;
    align-items: center;
    gap: 4px;
    flex: none;
    height: 46px;
    margin-top: 3px;
    padding-right: 8px;
    border-top: 2px solid #fff;
    box-shadow: inset 0 -4px #d4d0c8, inset 0 -6px #fff;
    font-size: 24px;
}

.ready {
    flex: 1;
    height: 36px;
    margin-right: 8px;
    padding-left: 12px;
    line-height: 34px;
    border-right: 2px solid #808080;
}

.pane {
    height: 30px;
    border: 2px solid;
    border-color: #808080 #fff #fff #808080;
}

.w48 { width: 46px; }
.w56 { width: 58px; }
.w60 { width: 60px; }
.w68 { width: 68px; }
.w260 { width: 262px; }

.desktop {
    display: flex;
    justify-content: flex-end;
    flex: none;
    height: 48px;
    padding: 0 3px 3px 0;
    background: linear-gradient(90deg, #0000ff, #000008 92%);
}

.desktop span {
    width: 163px;
    background: linear-gradient(90deg, #2b5fe8, #3366ff);
}
</style>
